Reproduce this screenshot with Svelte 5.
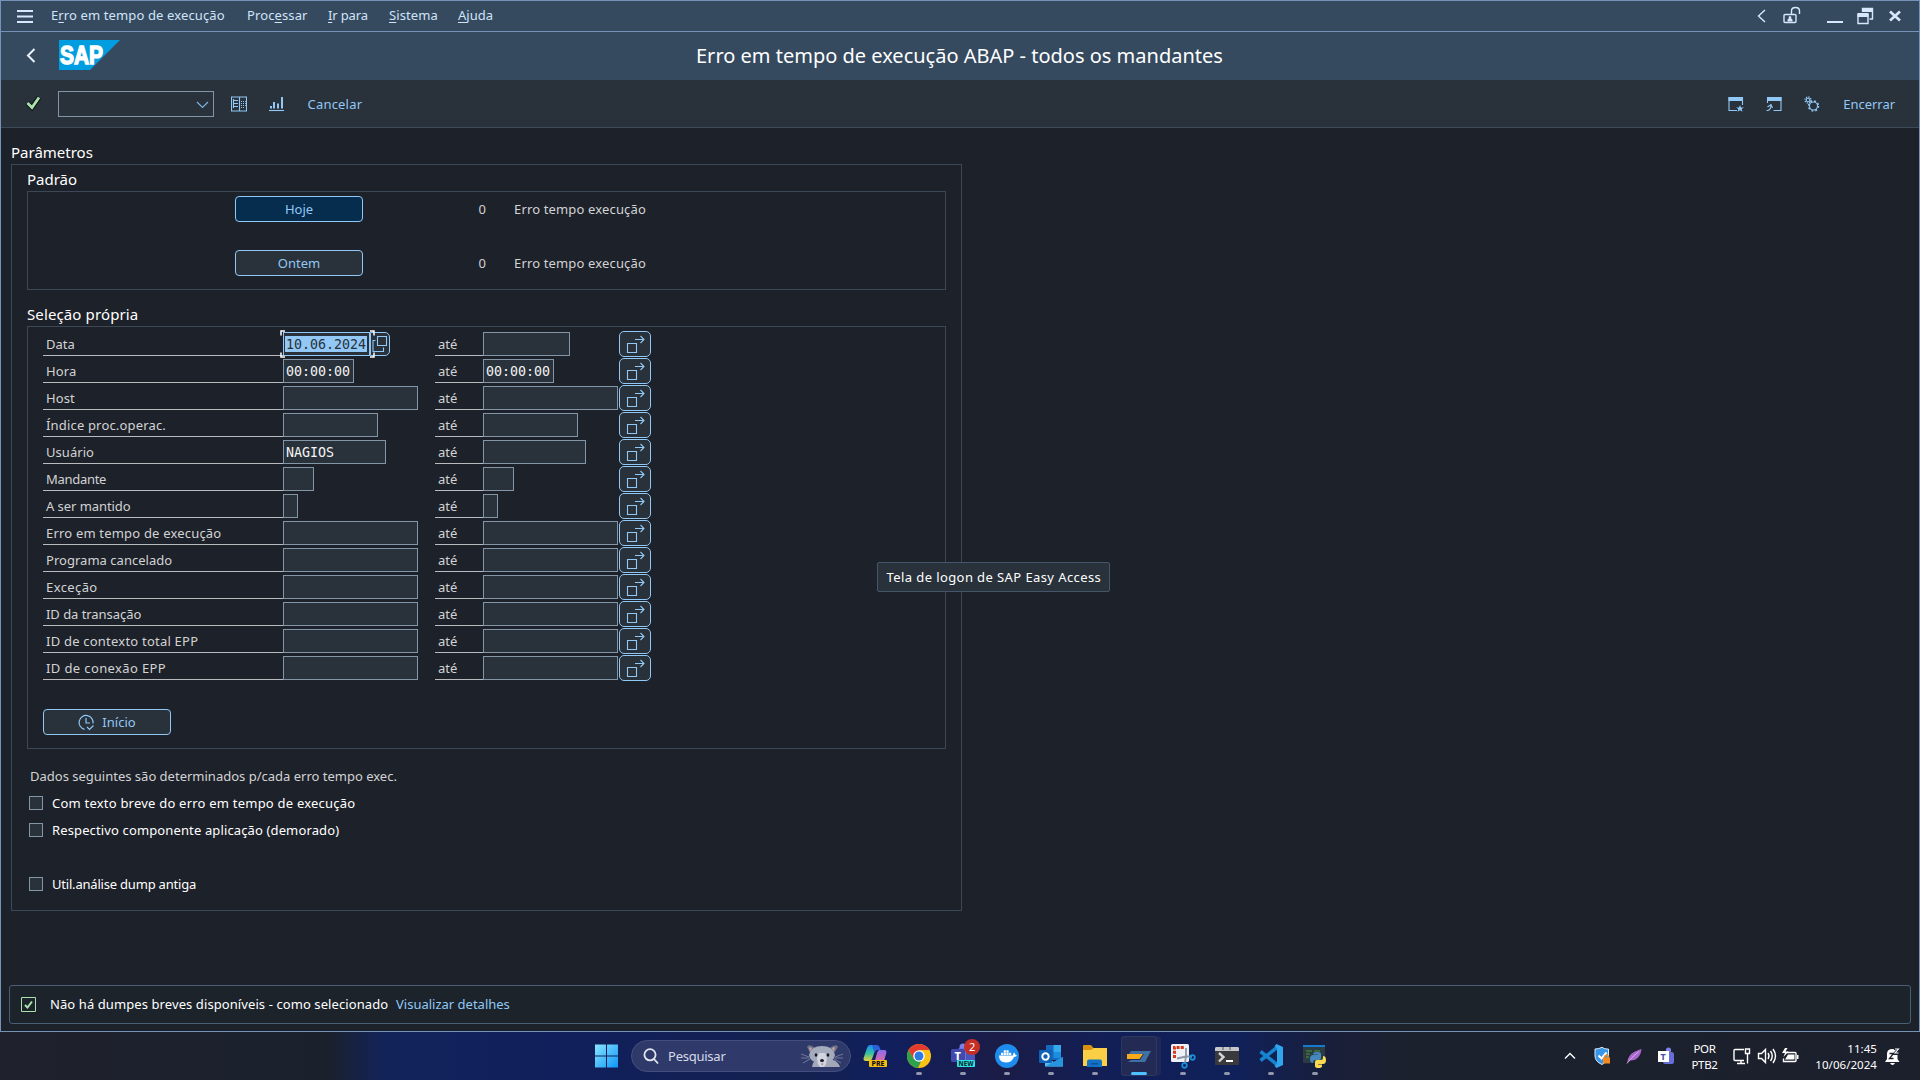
<script>
  // Selection criteria; `size` is the field length in characters.
  const criteria = [
    { label: 'Data', size: 10, from: '10.06.2024', focused: true, ls: 0 },
    { label: 'Hora', size: 8, from: '00:00:00', to: '00:00:00', ls: 0.1 },
    { label: 'Host', size: 16, ls: 0.1 },
    { label: 'Índice proc.operac.', size: 11, ls: 0.17 },
    { label: 'Usuário', size: 12, from: 'NAGIOS', ls: 0.05 },
    { label: 'Mandante', size: 3, ls: -0.3 },
    { label: 'A ser mantido', size: 1, ls: -0.06 },
    { label: 'Erro em tempo de execução', size: 16, ls: 0.19 },
    { label: 'Programa cancelado', size: 16, ls: 0.03 },
    { label: 'Exceção', size: 16, ls: 0.4 },
    { label: 'ID da transação', size: 16, ls: -0.05 },
    { label: 'ID de contexto total EPP', size: 16, ls: 0.22 },
    { label: 'ID de conexão EPP', size: 16, ls: 0.38 }
  ];
  const fieldWidth = (size) => size * 8 + 7;
</script>

{#snippet multi()}
  <button class="multi" aria-label="Seleção múltipla">
    <svg width="30" height="24" viewBox="0 0 30 24">
      <path d="M7.500 11.500h9v9h-9zM15 7.500h9M20.500 4l3.500 3.500-3.500 3.500" />
    </svg>
  </button>
{/snippet}

<div class="screen">
  <div class="window">
    <nav class="menubar">
      <svg class="burger" width="16" height="13" viewBox="0 0 16 13"><path d="M0 1h16M0 6.500h16M0 12h16" /></svg>
      <span class="m1">E<u>r</u>ro em tempo de execução</span>
      <span class="m2">Proc<u>e</u>ssar</span>
      <span class="m3"><u>I</u>r para</span>
      <span class="m4"><u>S</u>istema</span>
      <span class="m5"><u>A</u>juda</span>
      <div class="winctl">
        <svg width="150" height="30" viewBox="1757 1 150 30">
          <path class="thin" d="M1765 10l-6.500 6 6.500 6" />
          <path class="thin" d="M1785 14.500h10q1 0 1 1v6q0 1-1 1h-10q-1 0-1-1v-6q0-1 1-1z M1791.500 14v-3q0-3.500 4-3.500t4 3.500v3" />
          <path d="M1787.500 21.500v-1.500q0-1 1.200-1.300-.6-2.500 1.300-2.700 1.900.2 1.300 2.700 1.200.3 1.200 1.300v1.500z" class="solid" />
          <path class="bar" d="M1827 22h16" />
          <path class="solid" d="M1862 8h11v4h-11z" />
          <path class="thin" d="M1862.500 12V8.500h10v10.500h-3M1858 14.500h10v9h-10z" />
          <path class="solid" d="M1857.500 13h11v4h-11z" />
          <path class="cross" d="M1890 11.500l10 9M1900 11.500l-10 9" />
        </svg>
      </div>
    </nav>

    <header class="titlebar">
      <svg class="back" width="10" height="15" viewBox="0 0 10 15"><path d="M8.500 1L2 7.500 8.500 14" /></svg>
      <svg class="logo" width="61" height="30" viewBox="0 0 61 30">
        <polygon points="0,0 61,0 31,30 0,30" />
        <text x="1" y="24" textLength="43" lengthAdjust="spacingAndGlyphs">SAP</text>
      </svg>
      <h1>Erro em tempo de execução ABAP - todos os mandantes</h1>
    </header>

    <div class="toolbar">
      <svg class="ok" width="18" height="16" viewBox="0 0 18 16"><path class="edge" d="M2.500 8l4.500 4.500L14 2.500" /><path d="M2.500 8l4.500 4.500L14 2.500" /></svg>
      <div class="combo"><svg width="13" height="8" viewBox="0 0 13 8"><path d="M1 1l5.500 5.500L12 1" /></svg></div>
      <svg class="ico i1" width="16" height="16" viewBox="0 0 16 16">
        <path d="M.5 1h15v14H.5zM8.500 1v14M0 1h16" />
        <path d="M3 4.500h4M3 7.500h4M3 10.500h4M2.500 3v9M10 5.500h1M12 5.500h1M14 5.500h.8M10 7.500h1M12 7.500h1M14 7.500h.8M10 9.500h1M12 9.500h1M14 9.500h.8M10 11.500h1M12 11.500h1" />
      </svg>
      <svg class="ico i2" width="16" height="16" viewBox="0 0 16 16">
        <path d="M0 14.500h15" /><path class="fill" d="M1 10h2v2.500H1zM4 6h2v6.500H4zM8 7.500h2v5H8zM12 1h2v11.500h-2z" />
      </svg>
      <span class="cancel">Cancelar</span>
      <div class="tools">
        <svg class="ico" width="17" height="16" viewBox="0 0 17 16">
          <path d="M9 14.500H1V1.500h13.500V9" /><path class="fill" d="M.5 1h14.500v4H.5zM12 9l1 2.500h3l-2.300 1.600.8 2.700-2.500-1.600-2.500 1.600.8-2.700L8 11.500h3z" />
        </svg>
        <svg class="ico" width="17" height="16" viewBox="0 0 17 16">
          <path d="M7.500 14.500h7.500V1.500H1.500V7" /><path d="M.5 14.500h1.500q3-1 3-5.500M1.500 11l3.500-2.500 1.500 3.500" /><path class="fill" d="M1 1h14.500v4H1z" />
        </svg>
        <svg class="ico" width="17" height="16" viewBox="0 0 17 16">
          <circle cx="4" cy="4" r="1.800" /><circle class="teeth" cx="4" cy="4" r="3" />
          <circle cx="9.500" cy="10" r="4" /><circle class="teeth2" cx="9.500" cy="10" r="5" />
        </svg>
        <span>Encerrar</span>
      </div>
    </div>

    <main>
      <h2 class="first">Parâmetros</h2>
      <section class="group outer">
        <h2 class="std">Padrão</h2>
        <div class="group quick">
          <div class="qrow"><button class="btn primary">Hoje</button><span class="count">0</span><span class="qt">Erro tempo execução</span></div>
          <div class="qrow"><button class="btn">Ontem</button><span class="count">0</span><span class="qt">Erro tempo execução</span></div>
        </div>

        <h2 class="own">Seleção própria</h2>
        <div class="group own-box">
          {#each criteria as c}
            <div class="crow">
              <div class="label" style="letter-spacing:{c.ls}px">{c.label}</div>
              <div class="cell from">
                <div class="field" class:focused={c.focused} style="width:{fieldWidth(c.size)}px">
                  {#if c.from}<span>{c.from}</span>{/if}
                  {#if c.focused}
                    <svg class="corners" width="95" height="28" viewBox="0 0 95 28"><path d="M5 1H1V5.500M90 1H94V5.500M5 27H1V22.500M90 27H94V22.500" /></svg>
                  {/if}
                </div>
                {#if c.focused}
                  <button class="help" aria-label="Ajuda para entradas">
                    <svg width="17" height="22" viewBox="0 0 17 22"><path d="M6.500 3.500h9v9h-9zM4.500 7.500h-2.500v11h10.500v-4" /></svg>
                  </button>
                {/if}
              </div>
              <div class="label until">até</div>
              <div class="cell to"><div class="field" style="width:{fieldWidth(c.size)}px">{#if c.to}<span>{c.to}</span>{/if}</div></div>
              {@render multi()}
            </div>
          {/each}
          <button class="btn start">
            <svg width="17" height="17" viewBox="0 0 17 17"><path d="M6.500 15.300A7 7 0 1 1 15 9.500M8 4v5h4M9 13l2.500 2.500 4-4" /></svg>
            Início
          </button>
        </div>

        <p class="note">Dados seguintes são determinados p/cada erro tempo exec.</p>
        <div class="check"><i></i><span class="k1">Com texto breve do erro em tempo de execução</span></div>
        <div class="check"><i></i><span class="k2">Respectivo componente aplicação (demorado)</span></div>
        <div class="check spaced"><i></i><span class="k3">Util.análise dump antiga</span></div>
      </section>
    </main>

    <footer class="status">
      <svg width="15" height="15" viewBox="0 0 15 15"><path class="frame" d="M.5.5h14v14H.5z" /><path class="tick" d="M4 8l2.500 2.500 4.500-6" /></svg>
      <span class="msg">Não há dumpes breves disponíveis - como selecionado</span>
      <a href="#detalhes">Visualizar detalhes</a>
    </footer>

    <div class="tooltip">Tela de logon de SAP Easy Access</div>
  </div>

  <div class="taskbar">
    <svg class="start-logo" width="24" height="24" viewBox="0 0 24 24">
      <defs><linearGradient id="win" gradientUnits="userSpaceOnUse" x1="0" y1="0" x2="23" y2="23"><stop stop-color="#8ae6fd" /><stop offset="1" stop-color="#0f97f8" /></linearGradient></defs>
      <path fill="url(#win)" d="M0 .5h11v11H0zM12 .5h11v11H12zM0 12.500h11v11H0zM12 12.500h11v11H12z" />
    </svg>
    <div class="search">
      <svg class="lens" width="16" height="17" viewBox="0 0 16 17"><circle cx="7" cy="6.800" r="5.600" /><path d="M11 11l4 4.500" /></svg>
      <span>Pesquisar</span>
      <svg class="pet" width="42" height="24" viewBox="0 0 42 24">
        <path fill="#a3a8b8" d="M11 23q1-7 6-8h10q9 0 12 8z" />
        <path fill="#6c7184" d="M6 3q1-3 5-1l5 3-6 6zM37 3q-1-3-5-1l-6 3 6 6z" />
        <path fill="#c3a2aa" d="M8 3.500q2-1 3 1l-2 3zM34 3.500q-2-1-3 1l2 3z" />
        <path fill="#a4abbd" d="M8 11q2-9 13-9t13 9q-1 6-7 7l-3 4h-6l-3-4q-6-1-7-7z" />
        <path fill="#d0d5df" d="M18 9h6l2 5-1 6-2 3h-4l-2-3-1-6z" />
        <ellipse cx="15" cy="11" rx="1.300" ry="1.700" fill="#14141c" /><ellipse cx="27" cy="11" rx="1.300" ry="1.700" fill="#14141c" />
        <ellipse cx="21" cy="16.500" rx="2" ry="1.600" fill="#1a1a22" /><path d="M20 19.500h2.500l-1.200 2z" fill="#b97078" />
        <path fill="none" d="M0 10l8 3M0 14h8M2 19l7-4M42 10l-8 3M42 14h-8M40 19l-7-4" stroke="#9aa2b8" stroke-width=".6" />
      </svg>
    </div>

    <div class="apps">
      <div class="app">
        <svg width="26" height="26" viewBox="0 0 26 26">
          <defs>
            <linearGradient id="cpa" x2="0" y2="1"><stop stop-color="#1f8cf0" /><stop offset=".5" stop-color="#2fc0a8" /><stop offset="1" stop-color="#e8d33c" /></linearGradient>
            <linearGradient id="cpb" x2="0" y2="1"><stop stop-color="#8a6cf0" /><stop offset="1" stop-color="#ee6a98" /></linearGradient>
          </defs>
          <path fill="url(#cpb)" d="M17 7h5q3 0 2.300 3l-2 7q-1 3-4 3h-6l3-11z" />
          <path fill="url(#cpa)" d="M8 2h7l-5 14q-1 2-3 2H4q-3 0-2.400-3L5 5q1-3 3-3z" />
          <path fill="#2b62d9" d="M10 2h5q2 0 3 3l.5 2h-3q-2 0-3 3z" />
          <rect x="7" y="17" width="18" height="7" rx="1" fill="#f5be10" />
          <text x="9.500" y="23" font-size="6.500" font-weight="800" fill="#111" textLength="13" lengthAdjust="spacingAndGlyphs">PRE</text>
        </svg>
      </div>
      <div class="app run">
        <svg width="26" height="26" viewBox="0 0 26 26">
          <circle cx="13" cy="13" r="12" fill="#fbc116" />
          <path fill="#2da14b" d="M2.600 7L8 16l7 2.500L12 25A12 12 0 0 1 2.600 7z" />
          <path fill="#e33b2e" d="M13 13L7.500 15.500 2.600 7A12 12 0 0 1 23.400 7H13z" />
          <circle cx="13" cy="13" r="5.800" fill="#fff" /><circle cx="13" cy="13" r="4.500" fill="#2a7be4" />
        </svg>
      </div>
      <div class="app run">
        <svg width="26" height="26" viewBox="0 0 26 26">
          <circle cx="13" cy="4" r="3.500" fill="#7b83eb" /><rect x="8" y="5" width="13" height="14" rx="2" fill="#6a72dd" />
          <rect x="16" y="7" width="9" height="11" rx="2" fill="#4d55bd" />
          <rect x="1" y="6" width="14" height="13" rx="1.500" fill="#4248ae" />
          <text x="4.500" y="16.500" font-size="11" font-weight="800" fill="#fff">T</text>
          <rect x="7" y="17" width="18" height="7" rx="1" fill="#2fe3e3" />
          <text x="8.500" y="23" font-size="6.500" font-weight="800" fill="#072a2e" textLength="15" lengthAdjust="spacingAndGlyphs">NEW</text>
          <circle cx="22" cy="4" r="8" fill="#c62f26" />
          <text x="19" y="8" font-size="11" fill="#fff">2</text>
        </svg>
      </div>
      <div class="app run">
        <svg width="26" height="26" viewBox="0 0 26 26">
          <circle cx="13" cy="13" r="12" fill="#1d8ced" />
          <path fill="#fff" d="M5 12.500h14q0-2 1-3 1.500 1 1.500 2.500l1.500.3q-.5 1.700-3 1.700-2 5.500-8 5.500-7 0-7-7zM7 9.700h2.200V12H7zM9.700 9.700h2.200V12H9.700zM12.400 9.700h2.200V12h-2.200zM15 9.700h2.200V12H15zM9.700 7.200h2.200v2.200H9.700zM12.400 7.200h2.200v2.200h-2.200z" />
        </svg>
      </div>
      <div class="app run">
        <svg width="26" height="26" viewBox="0 0 26 26">
          <rect x="8" y="2" width="15" height="15" rx="1" fill="#1769bd" /><path fill="#35a8ee" d="M15.500 2H23v7h-7.500z" /><path fill="#1a8fe0" d="M15.500 9H23v6h-7.500z" />
          <path fill="#55b9f3" d="M7 23.500V14l9 5 9-5v9.500z" /><path fill="#2794de" d="M7 23.500L25 14v9.500z" />
          <rect x="1" y="7" width="13" height="13" rx="1" fill="#0d62b8" /><circle cx="7.500" cy="13.500" r="3.200" fill="none" stroke="#fff" stroke-width="2" />
        </svg>
      </div>
      <div class="app run">
        <svg width="26" height="26" viewBox="0 0 26 26">
          <path fill="#d99210" d="M1 3q0-1 1-1h7l2.500 3-2.500 3H1z" /><path fill="#fbcf45" d="M1 7h8l2.500-2H25v18H1z" />
          <path fill="#1272c4" d="M5 24v-5.500q0-2 2-2h11q2 0 2 2V24z" /><path fill="#0b539c" d="M9 20h7v1.500H9z" />
        </svg>
      </div>
      <div class="app run active">
        <svg width="26" height="26" viewBox="0 0 26 26">
          <path fill="#3f71a4" d="M5 8h20L19 19H2l3-2h9l4-6H3z" /><path fill="#f7ab1b" d="M1 11h16l-3.500 5H1z" />
        </svg>
      </div>
      <div class="app run">
        <svg width="26" height="26" viewBox="0 0 26 26">
          <rect x="1" y="1" width="18" height="18" rx="1.500" fill="#eef1f5" />
          <path d="M4.500 15V4.500H15" fill="none" stroke="#d83b1c" stroke-width="3" stroke-dasharray="3 1.200" />
          <path d="M16 5v8l-1 7M7 15.500l9-2 6 0" stroke="#8a97a5" stroke-width="1.800" fill="none" />
          <circle cx="22.500" cy="14.500" r="2.300" class="ring" /><circle cx="14.500" cy="22.500" r="2.300" class="ring" />
        </svg>
      </div>
      <div class="app run">
        <svg width="26" height="26" viewBox="0 0 26 26">
          <rect x="1" y="4" width="24" height="18" rx="1" fill="#3a3a3c" /><path fill="#c5c7ca" d="M2 4h22l1 1v3H1V5z" /><path d="M9 4v3M16 4v3" stroke="#555" />
          <path d="M5 10l4.500 4L5 18.500" stroke="#d5d5d5" stroke-width="2.400" fill="none" /><path d="M12 18h7" stroke="#fff" stroke-width="2" />
        </svg>
      </div>
      <div class="app run">
        <svg width="26" height="26" viewBox="0 0 26 26">
          <path fill="none" d="M2.500 8.500L19 21.500M2.500 17.500L19 4.500" stroke="#1583cf" stroke-width="3.600" />
          <path fill="#2fa5ee" d="M18.500 1L25 4v18l-6.500 3-2-2.200 2.500-2V5.200l-2.500-2z" />
        </svg>
      </div>
      <div class="app run">
        <svg width="26" height="26" viewBox="0 0 26 26">
          <rect x="1" y="2" width="22" height="18" fill="#2c3a42" /><path fill="#1679cf" d="M1 2h22v2H1z" /><path d="M4 8h6M4 11h4M12 8h6M4 14h3" stroke="#3e7a3c" stroke-width="1.500" />
          <path fill="#4687be" d="M11 11q0-2 4-2t4 2v4q0 2-2 2h-4q-2 0-2 3-3 0-3-4t3-4h5v-.5h-4z" />
          <path fill="#fbda50" d="M21 13q3 0 3 4t-3 4h-5v.5h4v1.500q0 2-3.500 2T13 23v-4q0-2 2-2h4q2 0 2-2z" />
        </svg>
      </div>
    </div>

    <div class="tray">
      <svg width="350" height="48" viewBox="1560 1032 350 48">
        <g class="lines">
          <path d="M1565 1058.500l5-5 5 5" stroke-width="1.700" />
          <path d="M1744 1049.500h-9q-1 0-1 1v9q0 1 1 1h9M1737 1063.500h8M1741 1060v3M1745.500 1049h4v4.500h-4zM1747.500 1053.500v10" />
          <path d="M1758.500 1053.500h3l4-4v13l-4-4h-3zM1768 1053q2 3 0 6M1770.500 1051q3.500 5 0 10M1773 1049q5 7 0 14" />
        </g>
        <path d="M1607 1049q-3 0-5-1.700-3 1.700-7 1.700v7q0 5.500 7 8.500 6-3 6.500-8.500v-7z" fill="#3796e8" stroke="#d9ebfb" />
        <path d="M1598.500 1055.500l3 3 5-6" fill="none" stroke="#fff" stroke-width="2" />
        <path d="M1603 1057.500h7v6h-7z" fill="#f58a1d" /><path d="M1604.500 1058v-1.500q2-2.500 4 0v1.500" fill="none" stroke="#f58a1d" stroke-width="1.300" />
        <path d="M1627 1063q1-8 7-11 4-2 7.500-3-.5 6-4 9-3 3-8 2.500z" fill="#a867cf" /><path d="M1627 1063.500q4-6 12-12" stroke="#dcc0ec" stroke-width=".8" fill="none" />
        <circle cx="1668.500" cy="1050" r="2.600" fill="#7b83eb" /><rect x="1663" y="1052" width="11" height="12" rx="2.500" fill="#666edb" />
        <rect x="1658" y="1051" width="11" height="11" fill="#fff" /><text x="1660.500" y="1060" font-size="9" font-weight="700" fill="#444ba8">T</text>
        <path d="M1787 1052.500h8q1 0 1 1v7q0 1-1 1h-11.500v-3" fill="none" stroke="#fff" stroke-width="1.400" /><path d="M1788 1054.500h6.500v5h-9.500zM1797 1055h1.500v4h-1.500zM1785 1048l-3 5h3l-1.500 4 5-5.500h-3l2-3.500z" fill="#fff" />
        <path d="M1885 1062l2-3v-5q0-5 5.500-5t5 5v5l2 3zM1890 1063h5q-1 2-2.500 2t-2.500-2z" fill="#fff" />
        <path d="M1889.500 1053.500h4l-4 5h4" fill="none" stroke="#1c212e" stroke-width="1.300" /><path d="M1894 1048.500h5l-4 5h4" fill="none" stroke="#1c212e" stroke-width="3" /><path d="M1895 1049h3.500l-3.500 4h3.500" fill="none" stroke="#fff" stroke-width="1.100" />
      </svg>
      <div class="lang"><span>POR</span><span>PTB2</span></div>
      <div class="clock"><span>11:45</span><span>10/06/2024</span></div>
    </div>
  </div>
</div>

<style>
  :global(body) { background: #1d2129; }
  .screen {
    width: 1920px; height: 1080px; overflow: hidden; box-sizing: border-box;
    display: flex; flex-direction: column;
    font: 13px "Noto Sans", sans-serif; color: #d2d3d5;
  }
  .screen :global(*) { box-sizing: border-box; }
  svg { display: block; flex: none; }
  h1, h2, p { margin: 0; font-weight: 400; }
  button { font: inherit; padding: 0; }

  .window {
    position: relative; height: 1032px; flex: none; display: flex; flex-direction: column;
    background: #1d2129; border: 1px solid #7493b6;
  }
  .window path { fill: none; }

  .menubar {
    height: 31px; flex: none; display: flex; align-items: center; padding-left: 16px;
    background: #354a5f; border-bottom: 1px solid #7493b6; color: #d1e3f8; white-space: nowrap;
  }
  .menubar > span { line-height: 28px; padding-bottom: 2px; }
  .menubar u { text-underline-offset: 2px; }
  .burger path { stroke: #d8e8fb; stroke-width: 2; }
  .m1 { margin-left: 18px; width: 196px; letter-spacing: .12px; }
  .m2 { width: 81px; letter-spacing: .12px; }
  .m3 { width: 61px; letter-spacing: -.15px; }
  .m4 { width: 69px; letter-spacing: .1px; }
  .winctl { margin-left: auto; padding-right: 12px; }
  .winctl path { stroke: #d8e8fb; }
  .winctl .thin { stroke-width: 1.4; }
  .winctl .solid { fill: #d8e8fb; stroke: none; }
  .winctl .bar { stroke-width: 2; }
  .winctl .cross { stroke-width: 2.6; }

  .titlebar { height: 48px; flex: none; display: flex; align-items: center; background: #354a5f; padding-left: 25px; }
  .back { margin-top: -1px; }
  .back path { stroke: #e8f1fb; stroke-width: 2; }
  .logo { margin: -2px 0 0 23px; }
  .logo polygon { fill: #009de0; }
  .logo text { font: 900 25px "Liberation Sans", sans-serif; fill: #fff; stroke: #fff; stroke-width: 1.4; }
  h1 { margin-left: 576px; font-size: 20px; line-height: 48px; color: #fff; letter-spacing: 0; white-space: nowrap; }

  .toolbar {
    height: 48px; flex: none; display: flex; align-items: center; padding-left: 24px;
    background: #29313a; border-bottom: 1px solid #3d4a57; color: #91c8f6;
  }
  .ok { margin-top: -1px; }
  .ok path { stroke: #abe2ab; stroke-width: 2.8; }
  .ok .edge { stroke: #10151a; stroke-width: 5; }
  .combo { margin-left: 15px; width: 156px; height: 26px; border: 1px solid #8396a8; display: flex; align-items: center; justify-content: flex-end; padding: 2px 4px 0 0; }
  .combo path { stroke: #7fb2dc; stroke-width: 1.2; }
  .ico path, .ico circle { stroke: #91c8f6; stroke-width: 1.1; fill: none; }
  .ico .fill { fill: #91c8f6; stroke: none; }
  .ico .teeth { stroke-width: 1.3; stroke-dasharray: 1.2 1.156; }
  .ico .teeth2 { stroke-width: 1.5; stroke-dasharray: 1.9 2.027; }
  .i1 { margin-left: 17px; }
  .i2 { margin-left: 22px; }
  .cancel { margin-left: 22.5px; letter-spacing: .2px; }
  .tools { margin-left: auto; display: flex; align-items: center; gap: 21px; padding-right: 24px; }
  .tools span { margin-left: 1px; letter-spacing: -.04px; }

  main { flex: 1; padding: 13px 0 0 10px; }
  h2 { font-size: 15px; line-height: 22px; padding-bottom: 1px; color: #fff; }
  .group { border: 1px solid #3c4856; }
  .outer { width: 951px; height: 747px; padding: 3px 0 0 15px; }
  .quick { width: 919px; height: 99px; padding: 4px 0 0 207px; display: flex; flex-direction: column; gap: 28px; }
  .qrow { display: flex; align-items: center; height: 26px; }
  .btn {
    width: 128px; height: 26px; border: 1px solid #91c8f6; border-radius: 4px; background: #29313a;
    color: #91c8f6; display: flex; align-items: center; justify-content: center;
  }
  .primary { background: #062c4e; }
  .count { width: 123px; text-align: right; }
  .qt { margin-left: 28px; letter-spacing: .15px; }
  .own { margin-top: 13px; letter-spacing: .12px; }
  .own-box { width: 919px; height: 423px; padding: 4px 0 0 15px; }
  .crow { display: flex; align-items: center; height: 27px; padding-bottom: 1px; }
  .label { width: 240px; height: 24px; line-height: 24px; padding: 0 0 0 3px; border-bottom: 1px solid #b9bbbe; white-space: nowrap; }
  .until { width: 48px; }
  .cell { display: flex; height: 24px; }
  .from { width: 152px; }
  .to { width: 136px; }
  .field {
    position: relative; height: 24px; border: 1px solid #8396a8; background: #29313a; color: #f5f5f5;
    font: 13.3px/23px "DejaVu Sans Mono", monospace; padding-left: 2px; white-space: nowrap;
  }
  .focused { border-color: #91c8f6; display: flex; align-items: center; padding-left: 1px; }
  .focused span { background: #91c8f6; color: #29313a; line-height: 17px; height: 16px; padding: 0 1px; }
  .corners { position: absolute; left: -4px; top: -3px; }
  .corners path { stroke: #fff; stroke-width: 1.5; }
  .help { width: 20px; height: 24px; background: #29313a; border: 1px solid #91c8f6; border-radius: 0 5px 5px 0; }
  .help path, .multi path { stroke: #91c8f6; stroke-width: 1.1; }
  .multi { width: 32px; height: 26px; background: #29313a; border: 1px solid #91c8f6; border-radius: 5px; }
  .multi svg { margin-top: -1px; margin-left: -.5px; }
  .start { margin-top: 27px; gap: 7px; }
  .start path { stroke: #91c8f6; stroke-width: 1.2; }

  .note { margin: 14px 0 0 3px; line-height: 27px; }
  .check { display: flex; align-items: center; height: 27px; padding: 0 0 2px 1.5px; color: #fff; }
  .check i { width: 14px; height: 14px; border: 1px solid #8396a8; background: #29313a; margin-right: 9.5px; }
  .spaced { margin-top: 27px; }
  .k1 { letter-spacing: .22px; }
  .k2 { letter-spacing: .13px; }
  .k3 { letter-spacing: -.2px; }

  .status {
    height: 39px; flex: none; margin: 0 8px 7px; display: flex; align-items: center; padding: 0 0 1px 11px;
    border: 1px solid #475e75; border-radius: 3px; background: #1c232b; color: #fff;
  }
  .frame, .tick { stroke: #abe2ab; }
  .tick { stroke-width: 2; }
  .msg { margin-left: 14px; width: 346px; letter-spacing: .09px; }
  .status a { color: #91c8f6; text-decoration: none; }

  .tooltip {
    position: absolute; left: 876px; top: 561px; width: 233px; height: 30px; line-height: 28px; padding-left: 8.5px;
    background: #29313a; border: 1px solid #46566a; border-radius: 2px; color: #fff; letter-spacing: .41px; white-space: nowrap;
  }

  .taskbar {
    height: 48px; flex: none; display: flex; align-items: center; padding-left: 595px;
    background: linear-gradient(90deg, #1f212c 0, #1a212d 330px, #12235a 385px, #111f5c 560px, #132150 800px, #111f5e 890px, #1b1c46 1000px, #111f58 1120px, #102058 1240px, #191f3a 1330px, #1c212e 1400px, #1c202d 100%);
    color: #fff;
  }
  .taskbar path:not([fill]) { fill: none; }
  .lines path { stroke: #fff; stroke-width: 1.4; }
  .search { margin-left: 12px; width: 220px; height: 32px; border-radius: 16px; border: 1px solid #434d80; background: #2f3a6b; display: flex; align-items: center; padding: 0 7px 0 11px; }
  .lens circle, .lens path { fill: none; stroke: #e3e5ef; stroke-width: 1.8; }
  .search span { margin-left: 9px; color: #d6d9e6; letter-spacing: -.24px; }
  .pet { margin-left: auto; }
  .apps { display: flex; margin-left: 6px; }
  .app { position: relative; width: 36px; height: 40px; margin-right: 8px; display: flex; align-items: center; justify-content: center; border-radius: 4px; }
  .app svg { overflow: visible; }
  .run::after { content: ""; position: absolute; bottom: 1px; left: 15px; width: 6px; height: 3px; border-radius: 2px; background: #9296ac; }
  .active { background: #232a54; box-shadow: inset 0 0 0 1px #30375f, 4px 0 0 #20285a; }
  .active::after { left: 10px; width: 16px; background: #4cc2ff; }
  .ring { fill: none; stroke: #178fd8; stroke-width: 1.7; }
  .tray { margin-left: auto; position: relative; width: 360px; height: 48px; font-size: 11.5px; }
  .tray span { display: block; line-height: 16px; }
  .lang { position: absolute; left: 124px; top: 9px; width: 41px; text-align: center; letter-spacing: -.3px; }
  .clock { position: absolute; right: 43px; top: 9px; text-align: right; letter-spacing: .05px; }
</style>
